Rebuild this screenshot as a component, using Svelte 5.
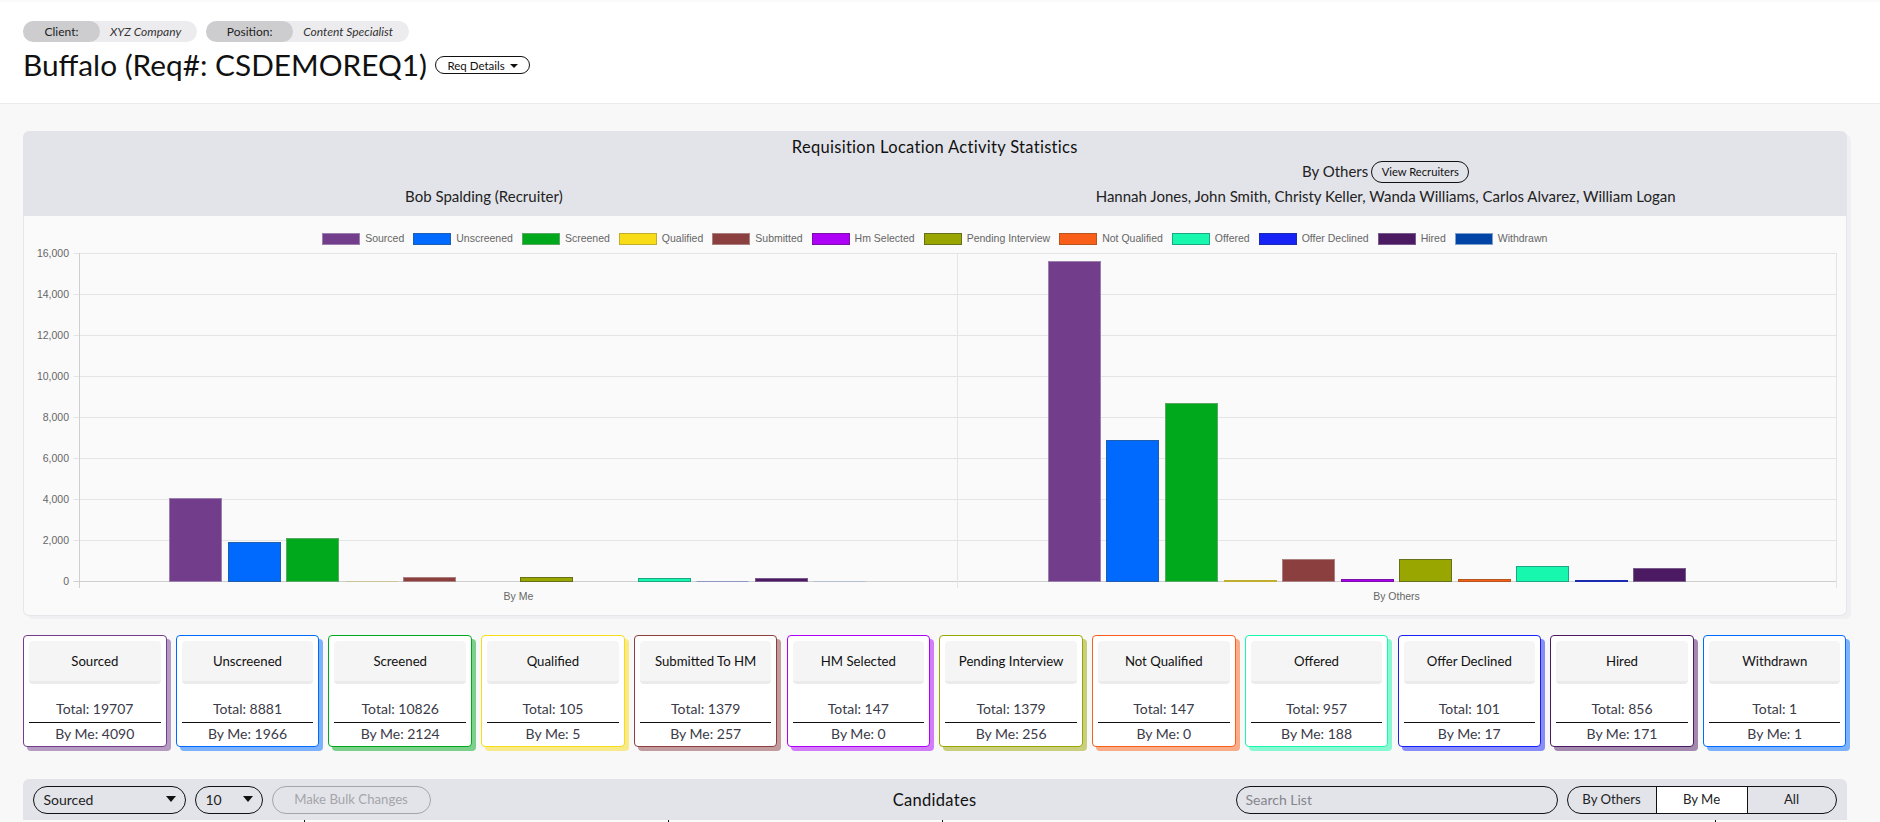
<script>
  const stages = [
    { name: 'Sourced', card: 'Sourced', color: '#723d8a', line: '#9b7fad', me: 4090, others: 15617, total: 19707 },
    { name: 'Unscreened', card: 'Unscreened', color: '#006aff', line: '#1f5fb0', me: 1966, others: 6915, total: 8881 },
    { name: 'Screened', card: 'Screened', color: '#00a91c', line: '#5aa866', me: 2124, others: 8702, total: 10826 },
    { name: 'Qualified', card: 'Qualified', color: '#f7dc17', line: '#c2ae2e', me: 5, others: 100, total: 105 },
    { name: 'Submitted', card: 'Submitted To HM', color: '#8b3f3f', line: '#ab8080', me: 257, others: 1122, total: 1379 },
    { name: 'Hm Selected', card: 'HM Selected', color: '#ae00f7', line: '#7a10a8', me: 0, others: 147, total: 147 },
    { name: 'Pending Interview', card: 'Pending Interview', color: '#99a600', line: '#66701a', me: 256, others: 1123, total: 1379 },
    { name: 'Not Qualified', card: 'Not Qualified', color: '#f95f18', line: '#b5551f', me: 0, others: 147, total: 147 },
    { name: 'Offered', card: 'Offered', color: '#17f7ae', line: '#1aa884', me: 188, others: 769, total: 957 },
    { name: 'Offer Declined', card: 'Offer Declined', color: '#1722f7', line: '#1a2bb0', me: 17, others: 84, total: 101 },
    { name: 'Hired', card: 'Hired', color: '#4c1a62', line: '#7a5c8c', me: 171, others: 685, total: 856 },
    { name: 'Withdrawn', card: 'Withdrawn', color: '#0045a5', line: '#7f9fcc', cardColor: '#006aff', me: 1, others: 0, total: 1 }
  ];
  const zeroY = 582;
  const scale = 328.5 / 16000;
  const axisL = 79.5;
  const axisM = 957.5;
  const axisR = 1836.5;
  const ticks = [0, 2000, 4000, 6000, 8000, 10000, 12000, 14000, 16000];
  const barX = (g, i) => Math.round(g.start + g.inset + i * 58.55) + 0.5;
  const yOf = (v) => Math.round(zeroY - v * scale) + 0.5;
  const barH = (v) => Math.max(zeroY - 0.5 - yOf(v), 0);
  const gridY = (t) => Math.round(581 - t * scale) + 0.5;
  const groups = [
    { label: 'By Me', start: axisL, inset: 89.6, key: 'me' },
    { label: 'By Others', start: axisM, inset: 90.4, key: 'others' }
  ];
  const rowCells = [0, 1, 2, 3, 4];
</script>

<div class="page">
  <header class="top">
    <div class="pills">
      <div class="pill"><span class="pill-key client">Client:</span><em class="pill-val">XYZ Company</em></div>
      <div class="pill"><span class="pill-key position">Position:</span><em class="pill-val">Content Specialist</em></div>
    </div>
    <div class="title-row">
      <h1>Buffalo (Req#: CSDEMOREQ1)</h1>
      <button class="req">Req Details <i class="caret"></i></button>
    </div>
  </header>

  <main>
    <section class="stats">
      <div class="stats-head">
        <h2>Requisition Location Activity Statistics</h2>
        <div class="who">
          <div class="who-col">
            <div class="who-top"></div>
            <div>Bob Spalding (Recruiter)</div>
          </div>
          <div class="who-col">
            <div class="who-top">By Others <button class="view">View Recruiters</button></div>
            <div>Hannah Jones, John Smith, Christy Keller, Wanda Williams, Carlos Alvarez, William Logan</div>
          </div>
        </div>
      </div>
      <div class="chart">
        <div class="legend">
          {#each stages as s}
            <div class="legend-item">
              <span class="swatch" style="background:{s.color};border-color:{s.line}"></span>{s.name}
            </div>
          {/each}
        </div>
        <svg class="plot" viewBox="24 244 1822 372" width="1822" height="372" role="img" aria-label="Activity chart">
          {#each ticks as t}
            <line x1={axisL - 6} x2={axisR} y1={gridY(t)} y2={gridY(t)} stroke={t === 0 ? '#cfcfcf' : '#e4e4e4'} />
            <text class="axis" x="69" y={gridY(t) + 3.5} text-anchor="end">{t.toLocaleString('en-US')}</text>
          {/each}
          <line x1={axisL} x2={axisL} y1="253" y2="588" stroke="#cfcfcf" />
          <line x1={axisM} x2={axisM} y1="253" y2="588" stroke="#e4e4e4" />
          <line x1={axisR} x2={axisR} y1="253" y2="588" stroke="#e4e4e4" />
          {#each groups as g}
            {#each stages as s, i}
              {#if s[g.key] > 0}
                {#if barH(s[g.key]) > 0}
                  <rect x={barX(g, i)} y={yOf(s[g.key])} width="52" height={barH(s[g.key])} fill={s.color} stroke={s.line} />
                {:else}
                  <line x1={barX(g, i)} x2={barX(g, i) + 52} y1="581.5" y2="581.5" stroke={s.line} stroke-opacity="0.35" />
                {/if}
              {/if}
            {/each}
            <text class="axis" x={g.start + 439} y="600" text-anchor="middle">{g.label}</text>
          {/each}
        </svg>
      </div>
    </section>

    <section class="cards">
      {#each stages as s}
        <article class="card" style="--c:{s.cardColor ?? s.color}">
          <button class="card-btn">{s.card}</button>
          <div class="card-total">Total: {s.total}</div>
          <div class="card-me">By Me: {s.me}</div>
        </article>
      {/each}
    </section>

    <section class="list">
      <div class="toolbar">
        <div class="tools-left">
          <div class="sel sel-stage">Sourced<i class="caret big"></i></div>
          <div class="sel sel-size">10<i class="caret big"></i></div>
          <button class="bulk" disabled>Make Bulk Changes</button>
        </div>
        <h3>Candidates</h3>
        <div class="tools-right">
          <input class="search" placeholder="Search List" />
          <div class="toggle">
            <span class="by-others">By Others</span>
            <span class="by-me">By Me</span>
            <span class="all">All</span>
          </div>
        </div>
      </div>
      <div class="thead">
        {#each rowCells as c}<span class="th"></span>{/each}
      </div>
    </section>
  </main>
</div>

<style>
  :global(body) {
    margin: 0;
    background: #f8f8f9;
    overflow: hidden;
  }
  .page {
    width: 1880px;
    height: 822px;
    overflow: hidden;
    font-family: Lato, "Noto Sans", sans-serif;
    color: #222;
  }
  button {
    font-family: inherit;
    cursor: pointer;
  }
  .top {
    box-sizing: border-box;
    height: 104px;
    padding: 21px 23px 0;
    background: #fff;
    border-top: 2px solid #fafafa;
    border-bottom: 1px solid #ececef;
  }
  .top .pills {
    margin-top: -2px;
    display: flex;
    gap: 9px;
  }
  .pill {
    display: flex;
    align-items: center;
    height: 21px;
    border-radius: 11px;
    background: #ececee;
    font-size: 12px;
    color: #222;
  }
  .pill-key {
    display: flex;
    align-items: center;
    justify-content: center;
    height: 21px;
    border-radius: 11px;
    background: #cdcdcf;
  }
  .pill-key.client { width: 77px; }
  .pill-key.position { width: 87px; }
  .pill-val {
    padding: 0 16px 0 10px;
    color: #333;
  }
  .title-row {
    display: flex;
    align-items: center;
    gap: 8px;
    margin-top: 4px;
    height: 36px;
  }
  h1 {
    margin: 0;
    font-size: 29.8px;
    font-weight: 400;
    color: #111;
    white-space: nowrap;
  }
  .req {
    box-sizing: border-box;
    width: 95px;
    height: 18px;
    padding: 0;
    border: 1px solid #111;
    border-radius: 9px;
    background: #fff;
    font-size: 11.5px;
    color: #111;
    margin-top: 2px;
  }
  .caret {
    display: inline-block;
    width: 0;
    height: 0;
    margin-left: 2px;
    vertical-align: 2px;
    border-left: 4px solid transparent;
    border-right: 4px solid transparent;
    border-top: 4px solid #111;
  }
  .caret.big {
    margin: 0;
    border-left-width: 5px;
    border-right-width: 5px;
    border-top-width: 6px;
  }
  main {
    padding: 27px 33.5px 0 23px;
  }
  .stats {
    border-radius: 6px;
    box-shadow: 4px 3px 0 #f0f0f3;
  }
  .stats-head {
    box-sizing: border-box;
    height: 85px;
    background: #e3e4ea;
    border-radius: 6px 6px 0 0;
    padding-top: 5px;
    text-align: center;
    font-size: 15px;
  }
  h2 {
    margin: 0;
    height: 23px;
    line-height: 22px;
    font-size: 16.5px;
    font-weight: 400;
    letter-spacing: 0.3px;
    color: #111;
  }
  .who {
    display: grid;
    grid-template-columns: 1fr 1fr;
    padding: 0 10px;
    color: #222;
  }
  .who-col > div {
    height: 25px;
    line-height: 25px;
  }
  .who-top {
    display: flex;
    align-items: center;
    justify-content: center;
    gap: 3px;
  }
  .view {
    box-sizing: border-box;
    width: 98px;
    height: 22px;
    padding: 0;
    border: 1px solid #111;
    border-radius: 11px;
    background: transparent;
    font-size: 11.2px;
    color: #111;
  }
  .chart {
    box-sizing: border-box;
    height: 400px;
    background: #fafafa;
    border: 1px solid #e6e6ea;
    border-top: 0;
    border-radius: 0 0 6px 6px;
  }
  .legend {
    display: flex;
    justify-content: center;
    gap: 9px;
    height: 28px;
    padding: 17px 0 0;
    box-sizing: border-box;
    font-family: "Liberation Sans", Arial, sans-serif;
    font-size: 10.5px;
    color: #666;
  }
  .legend-item {
    display: flex;
    align-items: flex-start;
    line-height: 10px;
    white-space: nowrap;
  }
  .swatch {
    box-sizing: border-box;
    width: 38px;
    height: 12px;
    margin-right: 5px;
    border: 1px solid;
  }
  .plot {
    display: block;
  }
  .axis {
    font-family: "Liberation Sans", Arial, sans-serif;
    font-size: 10.5px;
    fill: #666;
  }
  .cards {
    display: grid;
    grid-template-columns: repeat(12, 1fr);
    gap: 9.2px;
    margin-top: 19px;
  }
  .card {
    box-sizing: border-box;
    height: 112px;
    padding: 5px;
    border: 1px solid var(--c);
    border-radius: 4px;
    background: #fff;
    box-shadow: 4px 4px 0 color-mix(in srgb, var(--c) 50%, transparent);
    text-align: center;
    font-size: 14px;
    color: #3a3a48;
  }
  .card-btn {
    box-sizing: border-box;
    display: block;
    width: 100%;
    height: 43px;
    padding: 0;
    border: 0;
    border-bottom: 3px solid #ebebeb;
    border-radius: 4px;
    background: #f5f5f5;
    font-size: 13.2px;
    color: #111;
  }
  .card-total {
    margin-top: 15px;
    height: 24px;
    line-height: 20px;
    box-sizing: border-box;
    border-bottom: 1px solid #111;
  }
  .card-me {
    height: 22px;
    line-height: 22px;
  }
  .list {
    margin-top: 32px;
  }
  .toolbar {
    box-sizing: border-box;
    height: 41px;
    padding: 7px 10px 0 9.5px;
    background: #e3e4ea;
    border-radius: 6px 6px 0 0;
    display: grid;
    grid-template-columns: 1fr auto 1fr;
    align-items: start;
    font-size: 14px;
  }
  .tools-left {
    display: flex;
    gap: 9px;
  }
  .tools-right {
    display: flex;
    justify-content: flex-end;
    gap: 9px;
  }
  .sel {
    box-sizing: border-box;
    height: 28px;
    padding: 0 9px 2px 10px;
    border: 1px solid #111;
    border-radius: 14px;
    display: flex;
    align-items: center;
    justify-content: space-between;
    color: #222;
  }
  .sel-stage { width: 153px; }
  .sel-size { width: 68px; }
  .bulk {
    box-sizing: border-box;
    width: 159px;
    height: 28px;
    padding: 0 0 2px;
    border: 1px solid #a5a5a8;
    border-radius: 14px;
    background: transparent;
    font-size: 13.2px;
    color: #a5a5a8;
  }
  h3 {
    margin: 3px 0 0;
    font-size: 16.5px;
    line-height: 22px;
    font-weight: 400;
    letter-spacing: 0.3px;
    color: #111;
  }
  .search {
    box-sizing: border-box;
    width: 322px;
    height: 28px;
    padding: 0 9px 2px;
    border: 1px solid #111;
    border-radius: 14px;
    background: transparent;
    font: 14px Lato, "Noto Sans", sans-serif;
    outline: none;
  }
  .search::placeholder {
    color: #85858a;
  }
  .toggle {
    box-sizing: border-box;
    display: flex;
    width: 270px;
    height: 28px;
    border: 1px solid #111;
    border-radius: 14px;
    overflow: hidden;
    font-size: 13.2px;
    color: #222;
  }
  .toggle span {
    display: flex;
    align-items: center;
    justify-content: center;
    box-sizing: border-box;
    height: 100%;
    padding-bottom: 2px;
  }
  .by-others { width: 89px; border-right: 1px solid #111; }
  .by-me { width: 91px; border-right: 1px solid #111; background: #fff; }
  .all { flex: 1; }
  .thead {
    display: grid;
    grid-template-columns: 282px 364px 274px 773px 1fr;
    height: 20px;
    background: #fafafa;
  }
  .th {
    border-right: 1px solid #111;
  }
  .th:last-child {
    border-right: 0;
  }
</style>
